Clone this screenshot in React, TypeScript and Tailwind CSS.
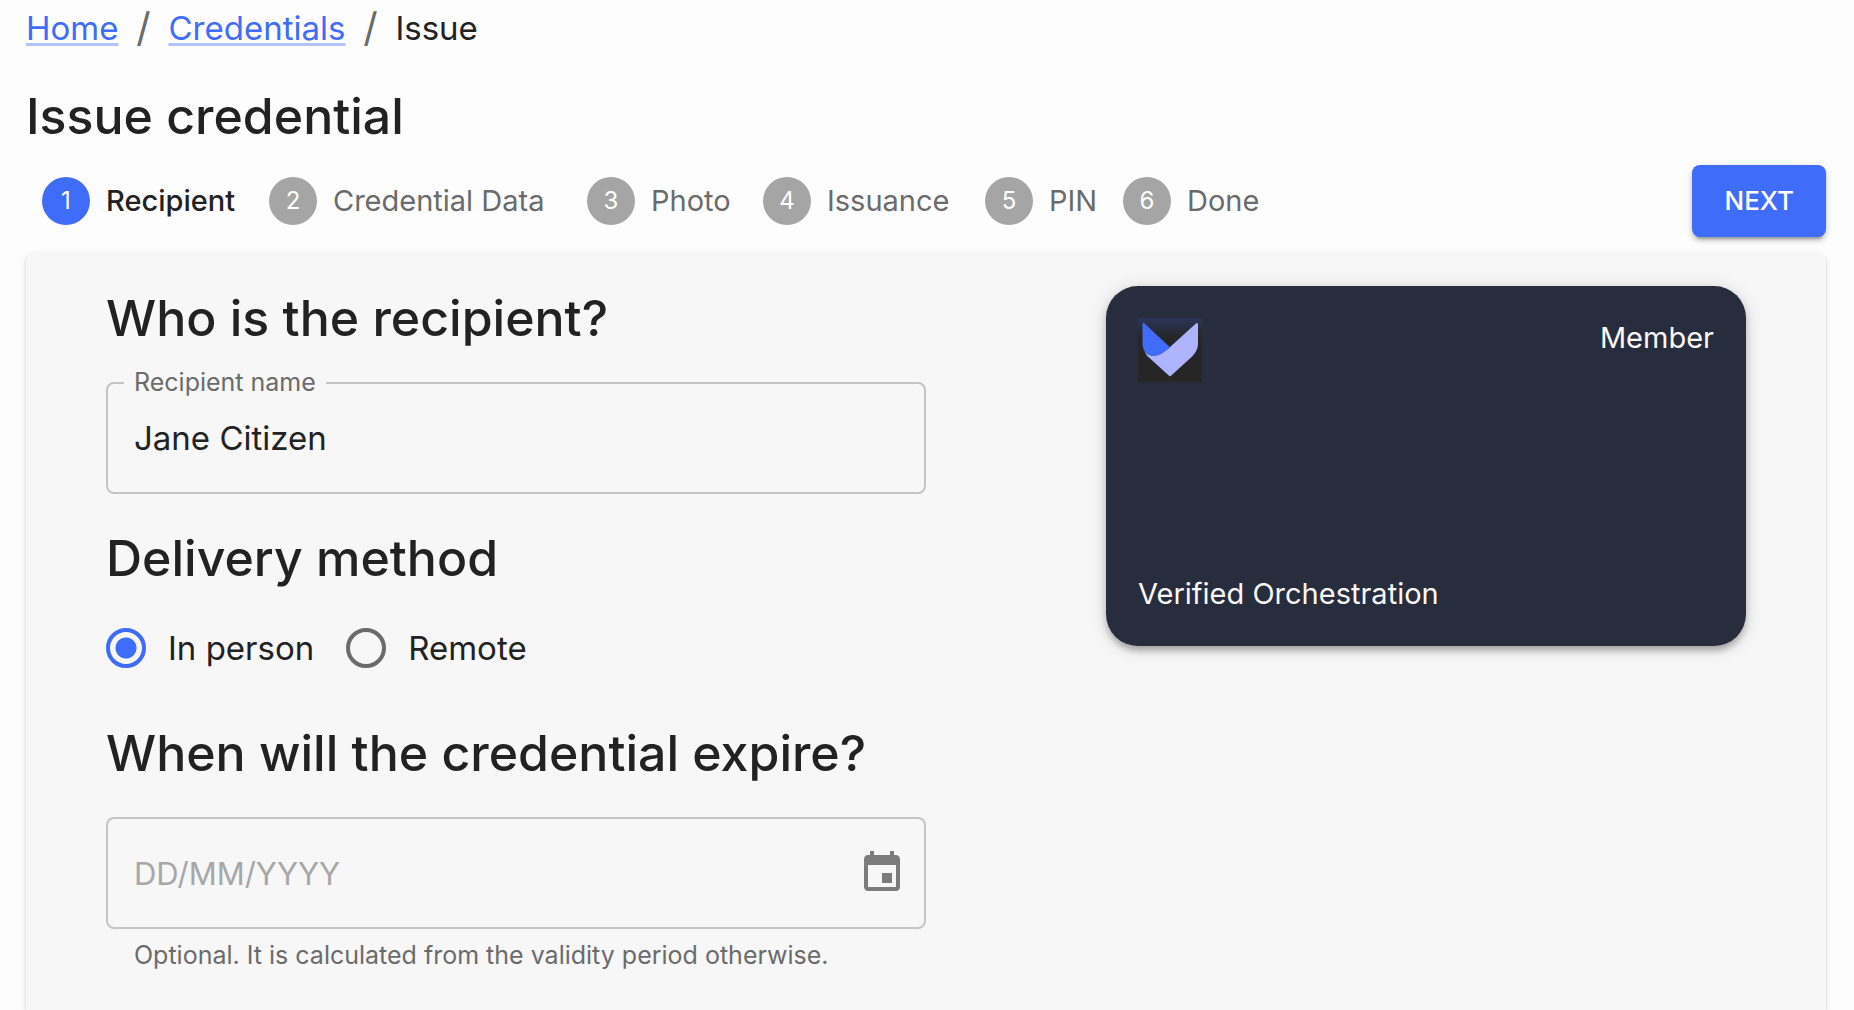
import { useState } from 'react'

const steps = [
  { label: 'Recipient', width: 'w-[227px]' },
  { label: 'Credential Data', width: 'w-[318px]' },
  { label: 'Photo', width: 'w-[176px]' },
  { label: 'Issuance', width: 'w-[222px]' },
  { label: 'PIN', width: 'w-[138px]' },
  { label: 'Done', width: 'w-[138px]' },
]

const deliveryMethods = ['In person', 'Remote']

function Breadcrumbs() {
  const link = 'text-[#3f6cf8] underline decoration-[#3f6cf8]/40 decoration-[3px] underline-offset-[3px]'
  const separator = 'w-4 text-center text-[40px] text-[#6b6b6b]'

  return (
    <nav aria-label="Breadcrumb" className="pt-1">
      <ol className="flex items-center gap-[17px] text-[33px] leading-12">
        <li><a href="#home" className={link}>Home</a></li>
        <li aria-hidden="true" className={separator}>/</li>
        <li><a href="#credentials" className={link}>Credentials</a></li>
        <li aria-hidden="true" className={separator}>/</li>
        <li aria-current="page">Issue</li>
      </ol>
    </nav>
  )
}

function Stepper({ active }: { active: number }) {
  return (
    <ol className="flex items-center pl-4 text-[29px] leading-10">
      {steps.map((step, i) => (
        <li key={step.label} className={`flex items-center gap-4 whitespace-nowrap ${step.width}`}>
          <span
            className={`flex size-12 shrink-0 items-center justify-center rounded-full text-2xl text-white ${
              i === active ? 'bg-[#3f6cf8]' : 'bg-[#a5a5a5]'
            }`}
          >
            {i + 1}
          </span>
          <span className={i === active ? 'font-medium' : 'text-[#6b6b6b]'}>{step.label}</span>
        </li>
      ))}
    </ol>
  )
}

function Logo() {
  return (
    <svg viewBox="0 0 64 64" className="size-16" aria-hidden="true">
      <defs>
        <linearGradient id="logo-bg" x1="0" y1="0" x2="0" y2="1">
          <stop offset="0" stopColor="#2b355b" />
          <stop offset="0.1" stopColor="#293049" />
          <stop offset="0.32" stopColor="#262626" />
        </linearGradient>
      </defs>
      <rect width="64" height="64" fill="url(#logo-bg)" />
      <path
        d="M58.2 5.3 31.5 29.5C25 35 18 38.5 13 37.5 10 37 8 35 6.3 32.5 7.3 35.5 9 37.8 11 39.6L31 57.8Q32 58.6 33 57.8L53 39.4C57.5 35.5 60 31 60 25V6.2Q59.6 4.4 58.2 5.3Z"
        fill="#aeb4ff"
      />
      <path
        d="M6.2 5.3 32 29.2C26.5 34 21.500 38 16 38 10 38 4.500 33 4.500 26V6Q5 4.500 6.2 5.3Z"
        fill="#3f6cf8"
      />
    </svg>
  )
}

function EventIcon() {
  return (
    <svg viewBox="0 0 24 24" className="size-12 fill-[#7b7b7b]" aria-hidden="true">
      <path d="M17 12h-5v5h5v-5zM16 1v2H8V1H6v2H5c-1.11 0-1.99.9-1.99 2L3 19c0 1.1.89 2 2 2h14c1.1 0 2-.9 2-2V5c0-1.1-.9-2-2-2h-1V1h-2zm3 18H5V8h14v11z" />
    </svg>
  )
}

function CredentialCard() {
  return (
    <div className="flex h-[360px] w-full max-w-[640px] flex-col justify-between rounded-[32px] bg-[#282d3d] p-8 text-[29px] leading-10 text-[#f8f8f8] shadow-[0_6px_6px_-2px_rgba(0,0,0,0.2),0_4px_10px_rgba(0,0,0,0.14),0_2px_20px_rgba(0,0,0,0.12)]">
      <div className="flex items-start justify-between">
        <Logo />
        <span>Member</span>
      </div>
      <span>Verified Orchestration</span>
    </div>
  )
}

export default function App() {
  const [name, setName] = useState('Jane Citizen')
  const [delivery, setDelivery] = useState('In person')
  const [expiry, setExpiry] = useState('')

  const heading = 'text-[50px] leading-16 font-medium'
  const field = 'flex h-28 items-center rounded-lg border-2 border-[#c4c4c4] pl-[26px]'
  const input = 'h-full min-w-0 flex-1 bg-transparent text-[33px] outline-none'

  return (
    <div className="flex min-h-screen flex-col bg-[#fdfdfd] pr-7 pl-[26px] font-[Inter,'Noto_Sans',sans-serif] text-[#222]">
      <Breadcrumbs />

      <h1 className={`mt-8 ${heading}`}>Issue credential</h1>

      <div className="mt-[17px] mb-4 flex items-center justify-between">
        <Stepper active={0} />
        <button
          type="button"
          className="rounded-lg bg-[#3f6cf8] px-8 py-3 text-[26px] leading-12 font-medium text-white shadow-[0_6px_2px_-4px_rgba(0,0,0,0.2),0_4px_4px_rgba(0,0,0,0.14),0_2px_10px_rgba(0,0,0,0.12)]"
        >
          NEXT
        </button>
      </div>

      <main className="grid flex-1 grid-cols-2 rounded-t-lg bg-[#f7f7f7] px-20 pt-[33px] shadow-[0_4px_2px_-2px_rgba(0,0,0,0.2),0_2px_2px_rgba(0,0,0,0.14),0_2px_6px_rgba(0,0,0,0.12)]">
        <form>
          <h2 className={heading}>Who is the recipient?</h2>
          <div className="relative mt-8">
            <label htmlFor="recipient" className="absolute -top-4 left-[18px] bg-[#f7f7f7] px-[10px] text-[25px] leading-8 text-[#6b6b6b]">
              Recipient name
            </label>
            <div className={field}>
              <input id="recipient" className={input} value={name} onChange={(e) => setName(e.target.value)} />
            </div>
          </div>

          <h2 id="delivery" className={`mt-8 ${heading}`}>Delivery method</h2>
          <div role="radiogroup" aria-labelledby="delivery" className="mt-[38px] flex gap-8">
            {deliveryMethods.map((method) => (
              <label key={method} className="flex items-center gap-[22px] text-[33px] leading-10">
                <input
                  type="radio"
                  name="delivery"
                  className="size-10 appearance-none rounded-full border-4 border-[#6b6b6b] checked:border-[#3f6cf8] checked:bg-[radial-gradient(circle,#3f6cf8_10px,transparent_11px)]"
                  checked={delivery === method}
                  onChange={() => setDelivery(method)}
                />
                {method}
              </label>
            ))}
          </div>

          <h2 id="expiry" className={`mt-[53px] ${heading}`}>When will the credential expire?</h2>
          <div className={`mt-8 pr-[18px] ${field}`}>
            <input
              aria-labelledby="expiry"
              aria-describedby="expiry-help"
              className={`${input} placeholder:text-[31px] placeholder:text-[#a7a7a7]`}
              placeholder="DD/MM/YYYY"
              value={expiry}
              onChange={(e) => setExpiry(e.target.value)}
            />
            <button type="button" aria-label="Choose date">
              <EventIcon />
            </button>
          </div>
          <p id="expiry-help" className="mt-2 pl-7 text-[25px] leading-9 text-[#6b6b6b]">
            Optional. It is calculated from the validity period otherwise.
          </p>
        </form>

        <div className="flex justify-end">
          <CredentialCard />
        </div>
      </main>
    </div>
  )
}
